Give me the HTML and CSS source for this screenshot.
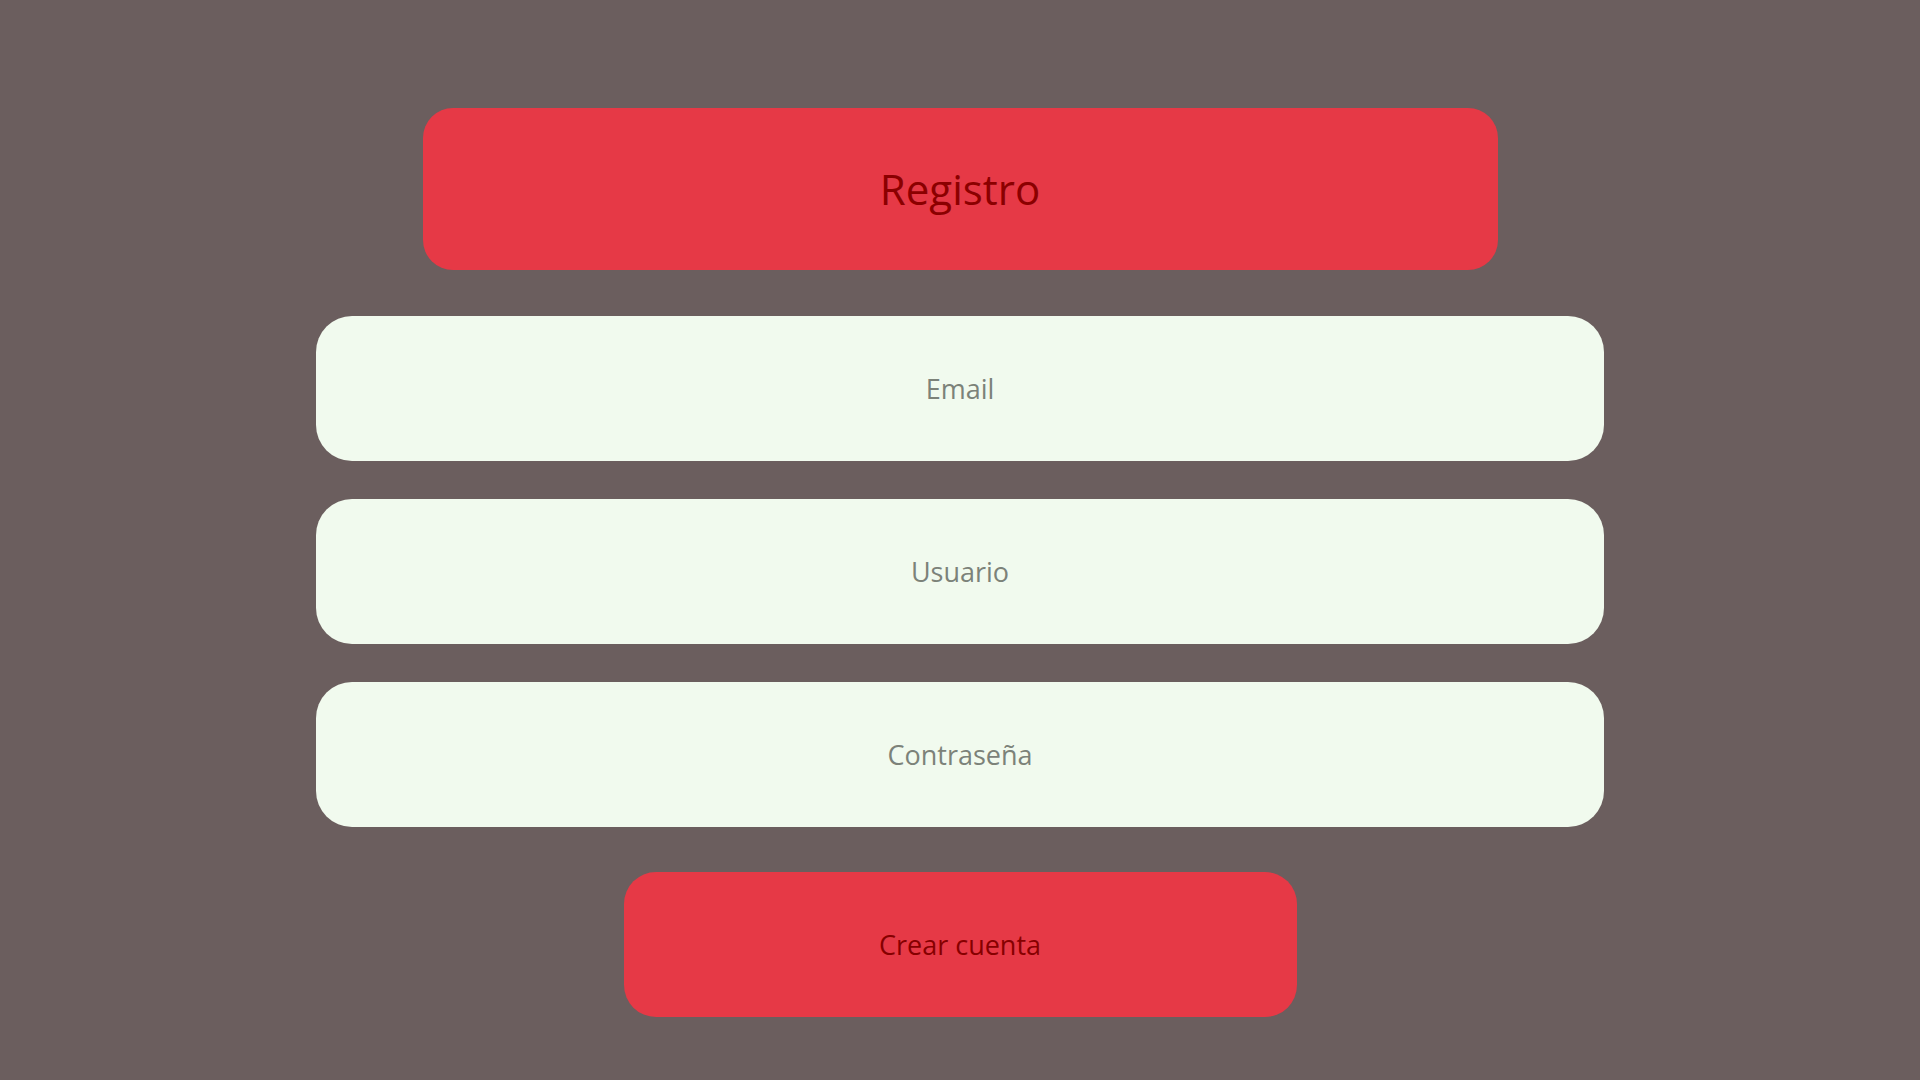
FILE: index.html
```html
<!DOCTYPE html>
<html lang="es">
<head>
<meta charset="utf-8">
<title>Registro</title>
<link rel="stylesheet" href="styles.css">
</head>
<body>
<main class="page">
  <h1 class="title">Registro</h1>
  <form class="form">
    <input class="field" type="email" placeholder="Email">
    <input class="field" type="text" placeholder="Usuario">
    <input class="field" type="password" placeholder="Contraseña">
    <button class="submit" type="button">Crear cuenta</button>
  </form>
</main>
</body>
</html>
```
FILE: styles.css
```css
html, body {
  margin: 0;
  padding: 0;
  height: 100%;
}
body {
  background: #6b5e5e;
  font-family: "Open Sans", "Noto Sans", sans-serif;
}
.page {
  display: flex;
  flex-direction: column;
  align-items: center;
  padding-top: 108px;
}
.title {
  margin: 0;
  width: 1075px;
  height: 162px;
  box-sizing: border-box;
  padding-bottom: 2px;
  background: #e63946;
  border-radius: 30px;
  color: #8b0000;
  font-size: 42px;
  font-weight: 400;
  display: flex;
  align-items: center;
  justify-content: center;
}
.form {
  display: flex;
  flex-direction: column;
  align-items: center;
  gap: 38px;
  margin-top: 46px;
}
.field {
  width: 1288px;
  height: 145px;
  box-sizing: border-box;
  border: none;
  outline: none;
  border-radius: 36px;
  background: #f1faee;
  font-family: "Open Sans", "Noto Sans", sans-serif;
  font-size: 27px;
  text-align: center;
  color: #333;
  padding: 0 20px;
}
.field::placeholder {
  color: #7c8279;
  opacity: 1;
}
.submit {
  margin-top: 7px;
  width: 673px;
  height: 145px;
  border: none;
  border-radius: 32px;
  background: #e63946;
  color: #860000;
  font-family: "Open Sans", "Noto Sans", sans-serif;
  font-size: 27px;
  cursor: pointer;
}
```
